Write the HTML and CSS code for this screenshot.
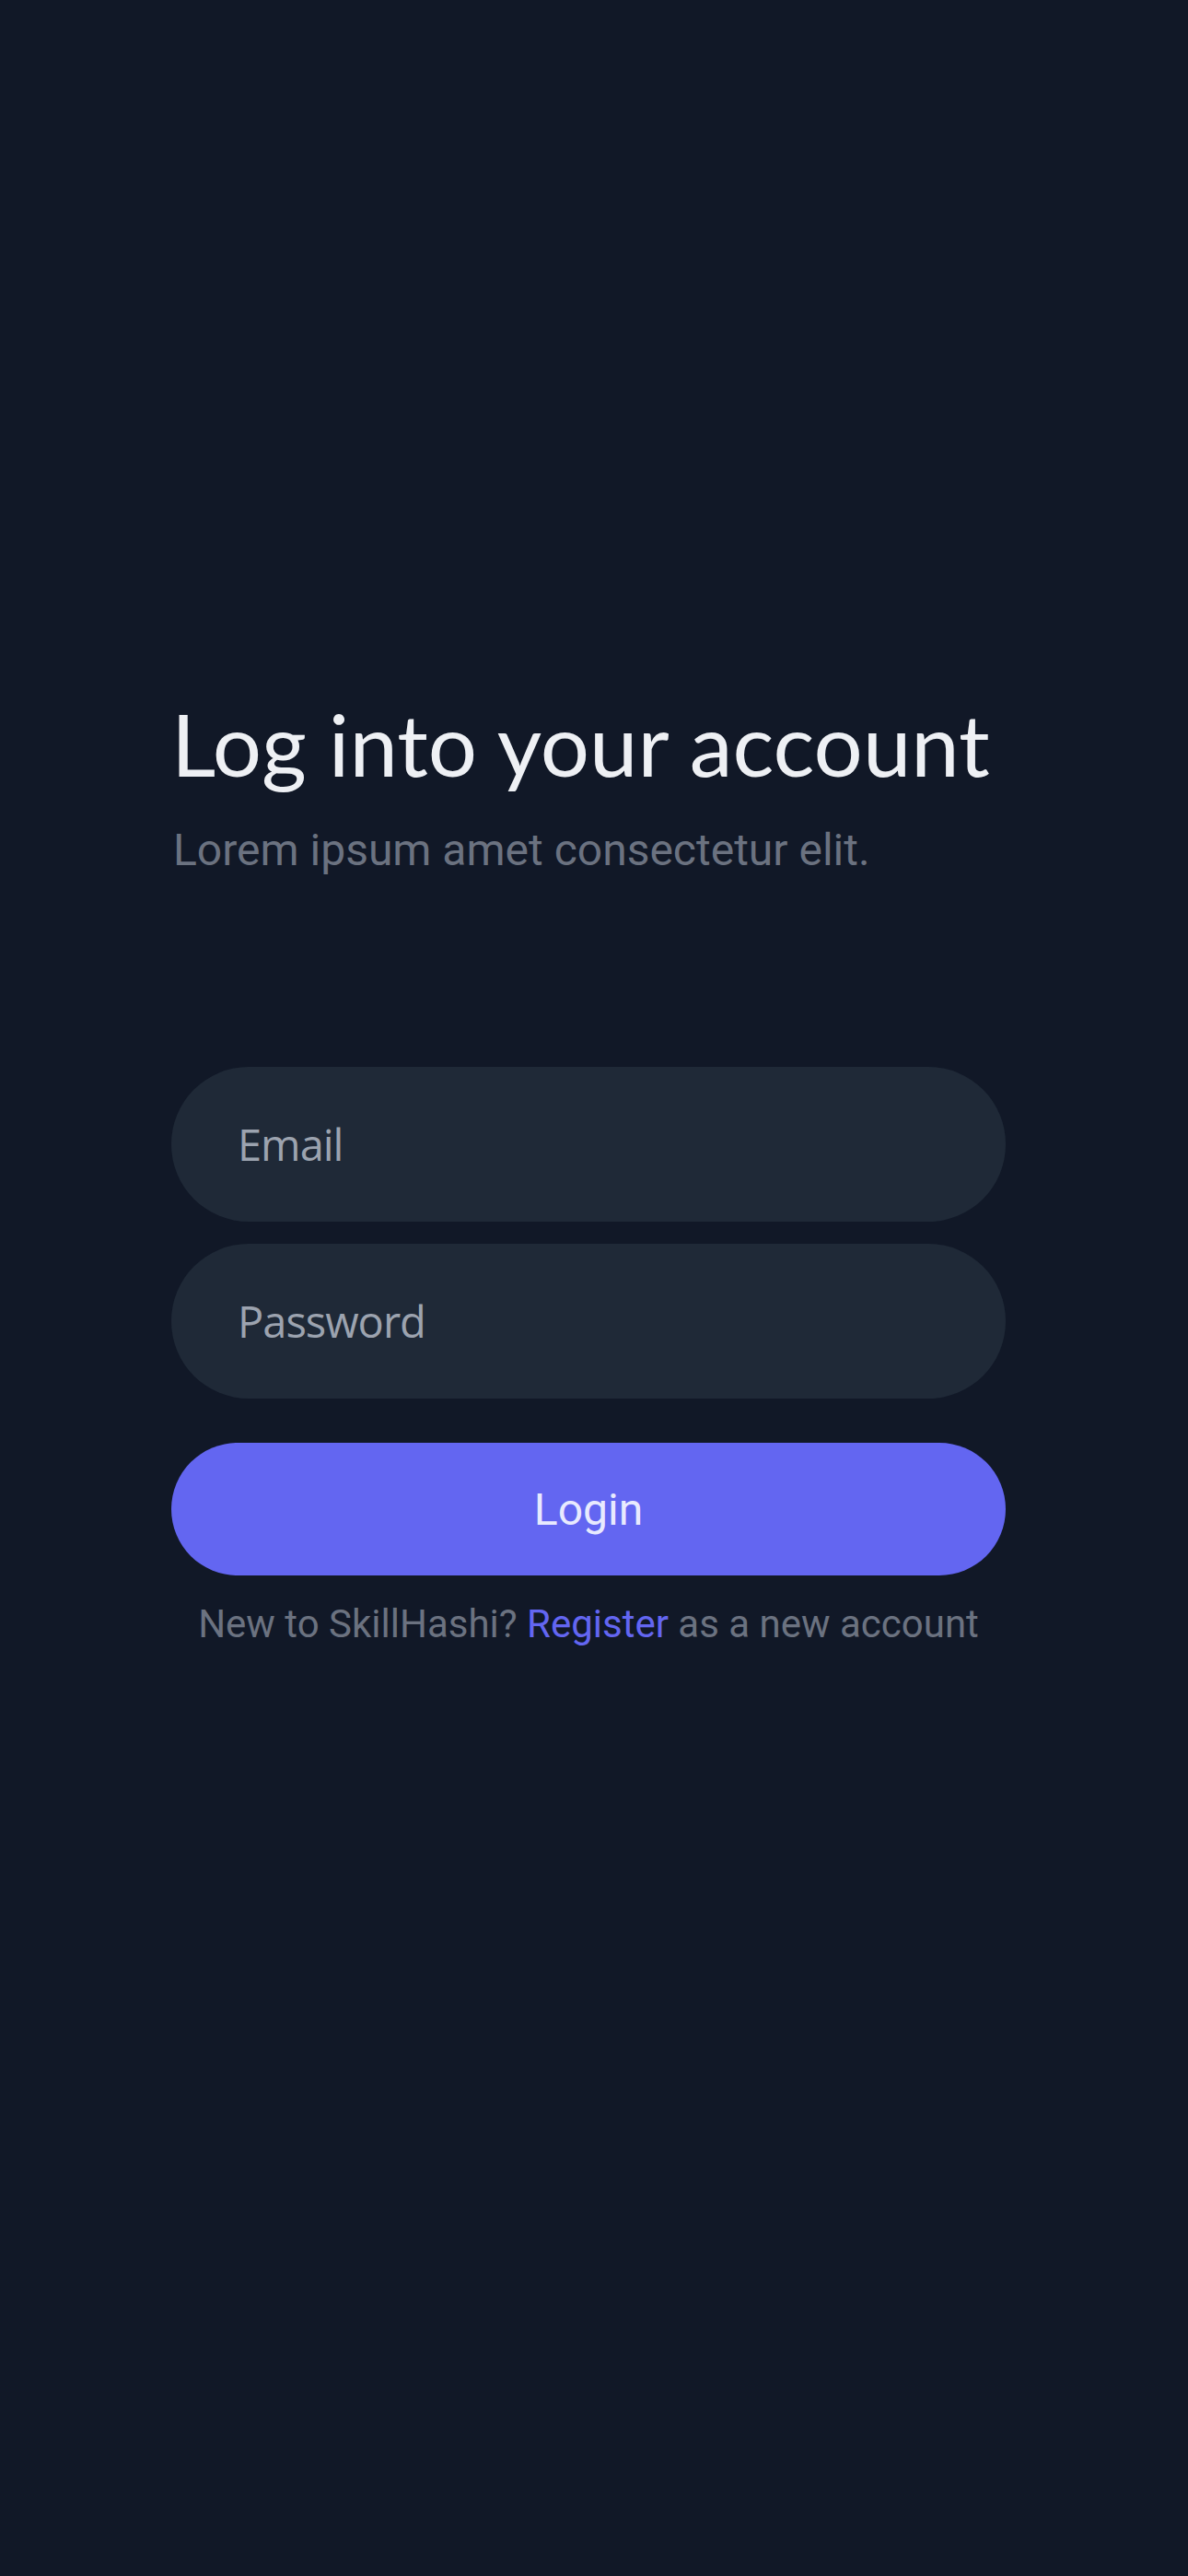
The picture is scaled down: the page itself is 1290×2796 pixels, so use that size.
FILE: index.html
```
<!DOCTYPE html>
<html>
<head>
<meta charset="utf-8">
<link rel="stylesheet" href="styles.css">
</head>
<body>
<main class="page">
  <section class="auth">
    <h1 class="title">Log into your account</h1>
    <p class="subtitle">Lorem ipsum amet consectetur elit.</p>
    <form class="form">
      <input class="field" type="email" placeholder="Email">
      <input class="field" type="password" placeholder="Password">
      <button class="btn" type="button">Login</button>
    </form>
    <p class="footer">New to SkillHashi? <a class="link" href="#">Register</a> as a new account</p>
  </section>
</main>
</body>
</html>
```

FILE: styles.css
```
html, body {
  margin: 0;
  padding: 0;
  background: #111827;
}
.page {
  min-height: 2796px;
  padding: 760px 0 0 186px;
  box-sizing: border-box;
}
.auth {
  width: 906px;
  display: flex;
  flex-direction: column;
}
.title {
  margin: 0;
  font-family: Lato, "Noto Sans", sans-serif;
  font-weight: 400;
  font-size: 94px;
  line-height: 1;
  color: #eef0f4;
  white-space: nowrap;
}
.subtitle {
  margin: 45px 0 0 2px;
  font-family: Roboto, sans-serif;
  font-size: 48px;
  line-height: 1;
  color: #6b7280;
}
.form {
  margin-top: 211px;
  display: flex;
  flex-direction: column;
  gap: 24px;
}
.field {
  height: 168px;
  border: none;
  border-radius: 84px;
  background: #1f2937;
  padding: 0 72px;
  font-family: "Open Sans", sans-serif;
  font-size: 47px;
  letter-spacing: -1px;
  color: #9ca3af;
  outline: none;
  box-sizing: border-box;
}
.field::placeholder {
  color: #9ca3af;
}
.btn {
  margin-top: 24px;
  height: 144px;
  border: none;
  border-radius: 72px;
  background: #6366f1;
  color: #e8eafe;
  font-family: Roboto, sans-serif;
  font-size: 48px;
  cursor: pointer;
}
.footer {
  margin: 32px 0 0;
  text-align: center;
  font-family: Roboto, sans-serif;
  font-size: 42px;
  line-height: 1;
  color: #6b7280;
}
.link {
  color: #6366f1;
  text-decoration: none;
}
```
